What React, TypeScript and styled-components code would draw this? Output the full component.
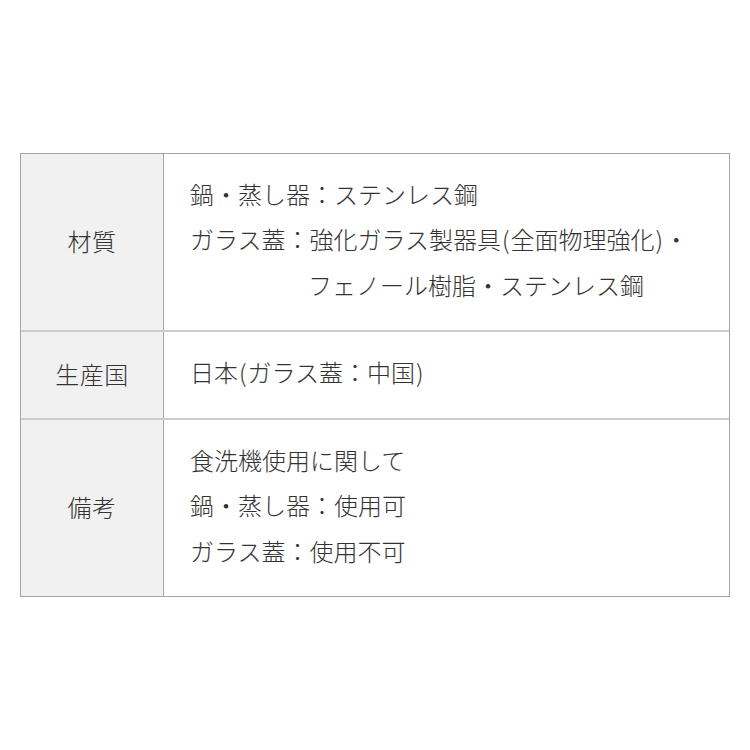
import styled, { createGlobalStyle } from 'styled-components';

const GlobalStyle = createGlobalStyle`
  html, body {
    margin: 0;
    padding: 0;
    background: #ffffff;
  }
  body {
    font-family: 'Noto Sans CJK JP', 'Noto Sans', sans-serif;
    color: #333333;
  }
`;

const Page = styled.div`
  min-height: 100vh;
  display: flex;
  align-items: center;
  padding: 0 20px;
  box-sizing: border-box;
`;

const Table = styled.div`
  width: 100%;
  border: 1px solid #a3a3a3;
  display: flex;
  flex-direction: column;
`;

const Row = styled.div`
  display: grid;
  grid-template-columns: 143px 1fr;

  & + & {
    border-top: 2px solid #cdcdcd;
  }
`;

const Label = styled.div`
  background: #f1f1f1;
  border-right: 1px solid #a8a8a8;
  display: flex;
  align-items: center;
  justify-content: center;
  padding-bottom: 4px;
  font-size: 24px;
  font-weight: 300;
  letter-spacing: 0.5px;
`;

const Value = styled.div`
  padding: 17px 26px 23px;
  font-size: 24px;
  font-weight: 300;
  line-height: 45.5px;
`;

const Line = styled.div<{ $indent?: number }>`
  padding-left: ${({ $indent }) => $indent ?? 0}px;
  white-space: nowrap;
`;

const Paren = styled.span`
  padding: 0 1px;
`;

interface SpecRow {
  label: string;
  lines: { text: string; indent?: number }[];
}

const rows: SpecRow[] = [
  {
    label: '材質',
    lines: [
      { text: '鍋・蒸し器：ステンレス鋼' },
      { text: 'ガラス蓋：強化ガラス製器具(全面物理強化)・' },
      { text: 'フェノール樹脂・ステンレス鋼', indent: 118 },
    ],
  },
  {
    label: '生産国',
    lines: [{ text: '日本(ガラス蓋：中国)' }],
  },
  {
    label: '備考',
    lines: [{ text: '食洗機使用に関して' }, { text: '鍋・蒸し器：使用可' }, { text: 'ガラス蓋：使用不可' }],
  },
];

// wrap the half-width parens so they get a little air like the original
const renderText = (text: string) =>
  text.split(/([()])/).map((part, i) => (part === '(' || part === ')' ? <Paren key={i}>{part}</Paren> : part));

export default function App() {
  return (
    <>
      <GlobalStyle />
      <Page>
        <Table>
          {rows.map((row) => (
            <Row key={row.label}>
              <Label>{row.label}</Label>
              <Value>
                {row.lines.map((line) => (
                  <Line key={line.text} $indent={line.indent}>
                    {renderText(line.text)}
                  </Line>
                ))}
              </Value>
            </Row>
          ))}
        </Table>
      </Page>
    </>
  );
}
